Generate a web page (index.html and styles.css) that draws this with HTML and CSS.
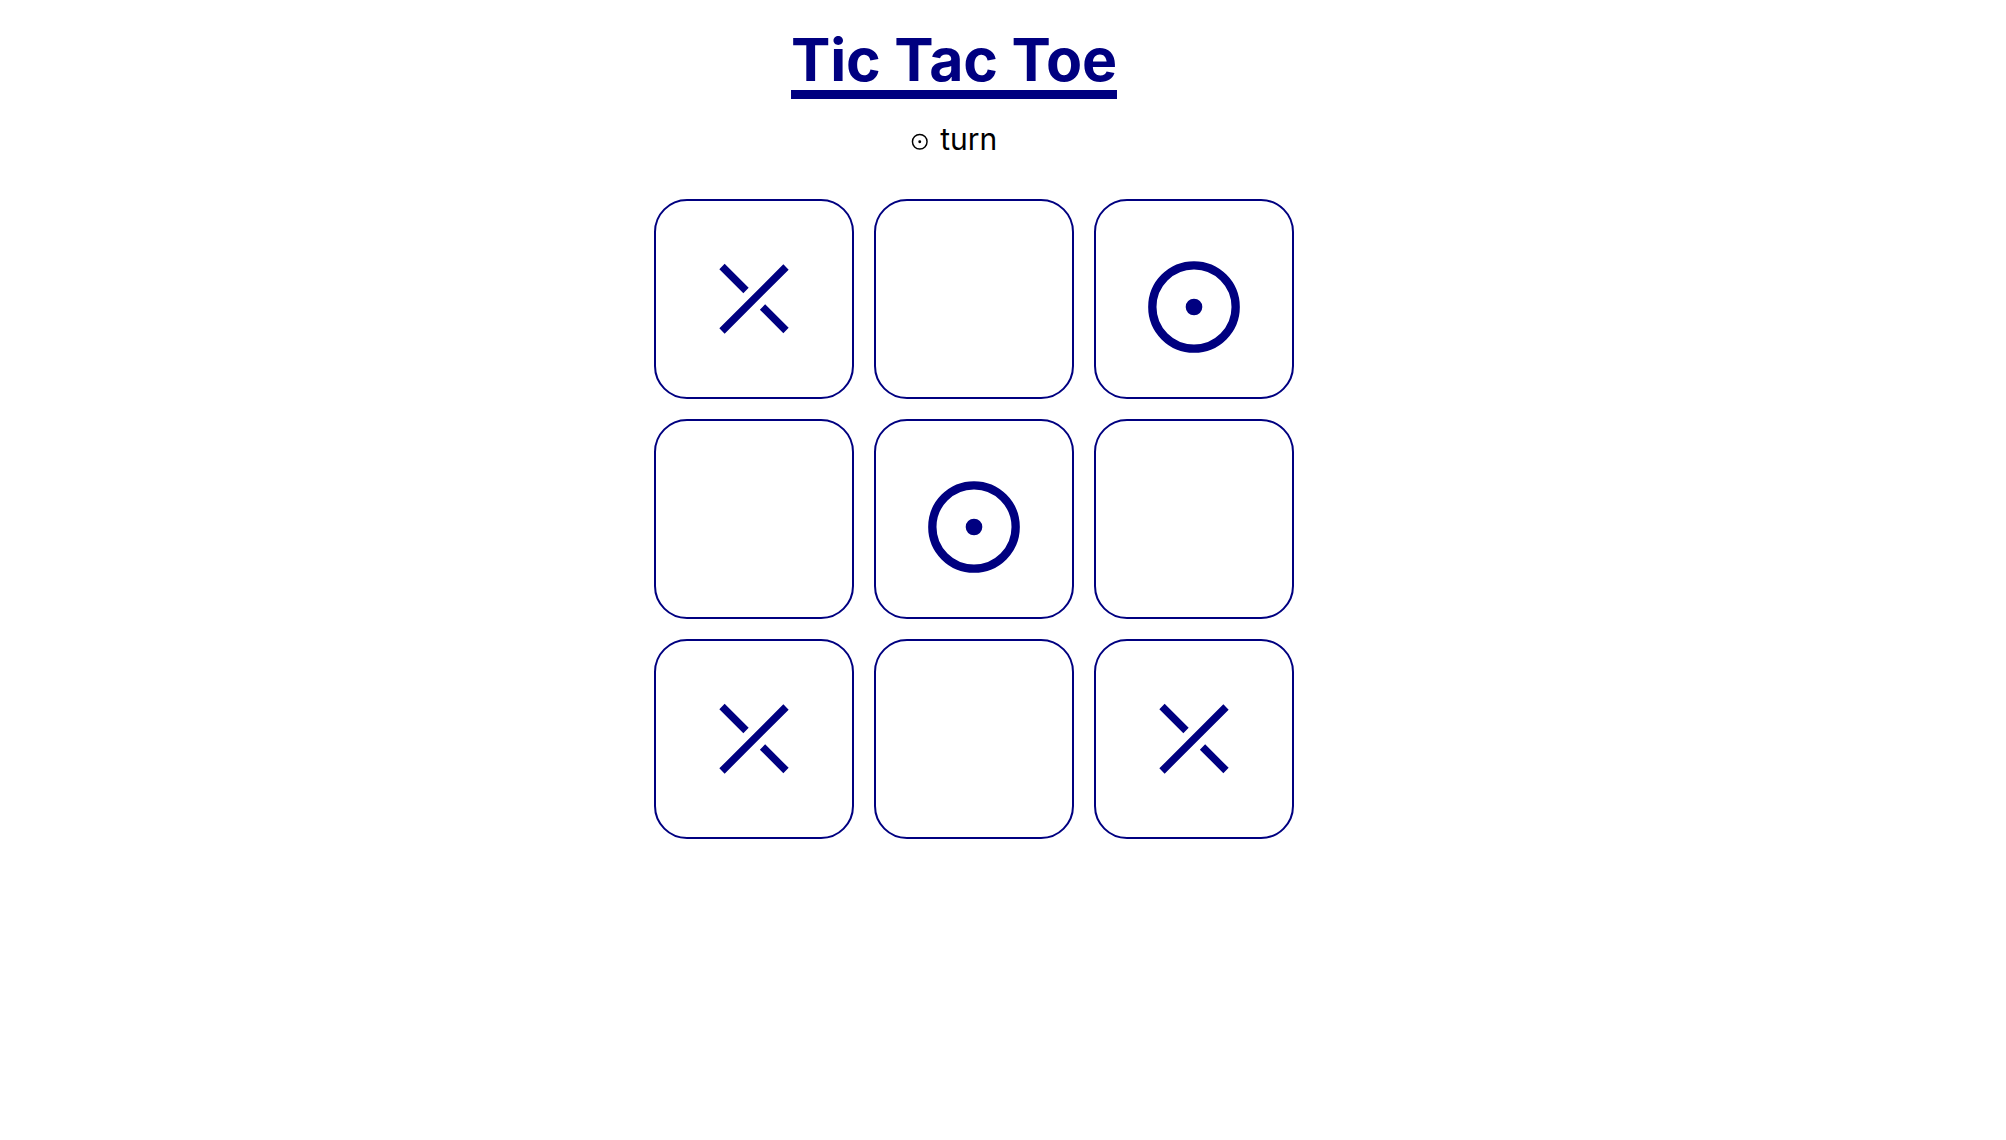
FILE: index.html
```html
<!DOCTYPE html>
<html lang="en">
<head>
<meta charset="utf-8">
<title>Tic Tac Toe</title>
<link rel="stylesheet" href="styles.css">
</head>
<body>
<div class="app">
  <h1 class="title">Tic Tac Toe</h1>
  <div class="status">
    <svg class="status-icon" viewBox="0 0 24 24" fill="none" stroke="currentColor" stroke-width="2"><circle cx="12" cy="12" r="10"/><circle cx="12" cy="12" r="1" fill="currentColor"/></svg>
    <span class="status-text">turn</span>
  </div>
  <div class="board">
    <div class="cell"><svg class="mark mark-x" viewBox="0 0 100 100"><path d="M18 82 L82 18 M18 17.5 L42 41.5 M58.5 58 L82 81.5"/></svg></div>
    <div class="cell"></div>
    <div class="cell"><svg class="mark mark-o" viewBox="0 0 24 24"><circle class="ring" cx="12" cy="12" r="10"/><circle class="dot" cx="12" cy="12" r="2"/></svg></div>
    <div class="cell"></div>
    <div class="cell"><svg class="mark mark-o" viewBox="0 0 24 24"><circle class="ring" cx="12" cy="12" r="10"/><circle class="dot" cx="12" cy="12" r="2"/></svg></div>
    <div class="cell"></div>
    <div class="cell"><svg class="mark mark-x" viewBox="0 0 100 100"><path d="M18 82 L82 18 M18 17.5 L42 41.5 M58.5 58 L82 81.5"/></svg></div>
    <div class="cell"></div>
    <div class="cell"><svg class="mark mark-x" viewBox="0 0 100 100"><path d="M18 82 L82 18 M18 17.5 L42 41.5 M58.5 58 L82 81.5"/></svg></div>
  </div>
</div>
</body>
</html>
```

FILE: styles.css
```css
html, body {
  margin: 0;
  padding: 0;
  background: #ffffff;
}

body {
  font-family: Inter, "Noto Sans", "Liberation Sans", sans-serif;
  color: #000000;
}

.app {
  width: 1908px;
  display: flex;
  flex-direction: column;
  align-items: center;
}

.title {
  margin: 25px 0 0;
  font-size: 59px;
  line-height: 70px;
  font-weight: 700;
  color: #000080;
  text-decoration: underline;
  text-decoration-thickness: 9px;
  text-underline-offset: 9px;
  letter-spacing: -0.2px;
}

.status {
  margin-top: 26px;
  height: 36px;
  display: flex;
  align-items: center;
  gap: 12px;
  font-size: 30px;
  line-height: 36px;
}

.status-icon {
  width: 17.5px;
  height: 17.5px;
  margin-top: 5px;
  color: #000000;
}

.board {
  align-self: flex-start;
  margin-left: 654px;
  margin-top: 42px;
  display: grid;
  grid-template-columns: repeat(3, 200px);
  grid-template-rows: repeat(3, 200px);
  gap: 20px;
}

.cell {
  box-sizing: border-box;
  border: 2px solid #000080;
  border-radius: 33px;
  background: #ffffff;
  display: flex;
  align-items: center;
  justify-content: center;
}

.mark {
  width: 100px;
  height: 100px;
  display: block;
}

.mark-x path {
  fill: none;
  stroke: #000080;
  stroke-width: 7.5;
  stroke-linecap: butt;
}

.mark-o {
  margin-top: 16px;
}

.mark-o .ring {
  fill: none;
  stroke: #000080;
  stroke-width: 2;
}

.mark-o .dot {
  fill: #000080;
}
```
